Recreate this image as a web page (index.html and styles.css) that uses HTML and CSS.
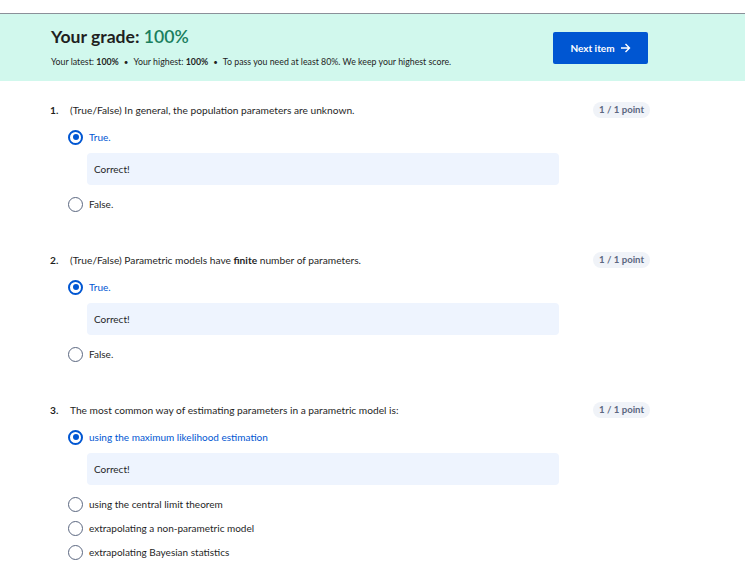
FILE: index.html
```html
<!DOCTYPE html>
<html>
<head>
<meta charset="utf-8">
<link rel="stylesheet" href="styles.css">
</head>
<body>
<header class="grade">
  <div class="grade-text">
    <h1 class="title">Your grade: <span class="pct">100%</span></h1>
    <p class="sub">Your latest: <b>100%</b><span class="dot">•</span>Your highest: <b>100%</b><span class="dot">•</span>To pass you need at least 80%. We keep your highest score.</p>
  </div>
  <button class="next">Next item
    <svg class="arrow" width="11" height="10" viewBox="0 0 11 10"><path d="M1 5h8.5M5.5 1l4 4-4 4" fill="none" stroke="#fff" stroke-width="1.4"/></svg>
  </button>
</header>

<main class="quiz">
  <section class="q">
    <div class="q-row">
      <span class="num">1.</span>
      <span class="q-text">(True/False) In general, the population parameters are unknown.</span>
      <span class="badge">1 / 1 point</span>
    </div>
    <div class="opts">
      <div class="opt sel"><span class="radio"></span><span class="lbl">True.</span></div>
      <div class="fb">Correct!</div>
      <div class="opt"><span class="radio"></span><span class="lbl">False.</span></div>
    </div>
  </section>

  <section class="q">
    <div class="q-row">
      <span class="num">2.</span>
      <span class="q-text">(True/False) Parametric models have <b>finite</b> number of parameters.</span>
      <span class="badge">1 / 1 point</span>
    </div>
    <div class="opts">
      <div class="opt sel"><span class="radio"></span><span class="lbl">True.</span></div>
      <div class="fb">Correct!</div>
      <div class="opt"><span class="radio"></span><span class="lbl">False.</span></div>
    </div>
  </section>

  <section class="q">
    <div class="q-row">
      <span class="num">3.</span>
      <span class="q-text">The most common way of estimating parameters in a parametric model is:</span>
      <span class="badge">1 / 1 point</span>
    </div>
    <div class="opts">
      <div class="opt sel"><span class="radio"></span><span class="lbl">using the maximum likelihood estimation</span></div>
      <div class="fb">Correct!</div>
      <div class="opt"><span class="radio"></span><span class="lbl">using the central limit theorem</span></div>
      <div class="opt"><span class="radio"></span><span class="lbl">extrapolating a non-parametric model</span></div>
      <div class="opt"><span class="radio"></span><span class="lbl">extrapolating Bayesian statistics</span></div>
    </div>
  </section>
</main>
</body>
</html>
```
FILE: styles.css
```css
* { box-sizing: border-box; }
html, body { margin: 0; padding: 0; background: #fff; }
body {
  font-family: Lato, "Noto Sans", sans-serif;
  color: #1f1f1f;
  padding-top: 13px;
}

.grade {
  border-top: 1px solid #8b9099;
  background: #d1f8ed;
  height: 68px;
  display: flex;
  align-items: center;
  justify-content: space-between;
  padding: 0 97px 0 51px;
}
.grade-text { padding-bottom: 2px; }
.title {
  margin: 0;
  font-size: 17.6px;
  font-weight: 700;
  line-height: 22px;
  color: #1f1f1f;
}
.pct { color: #1a7f5e; font-weight: 600; }
.sub {
  margin: 8px 0 0;
  font-size: 8.8px;
  line-height: 12px;
  color: #1f1f1f;
}
.sub b { font-weight: 700; }
.dot { margin: 0 5px; font-size: 8px; }

.next {
  width: 95px;
  height: 32px;
  border: 0;
  border-radius: 2px;
  background: #0056d2;
  color: #fff;
  font-family: Lato, "Noto Sans", sans-serif;
  font-size: 10px;
  font-weight: 700;
  display: flex;
  align-items: center;
  justify-content: center;
  gap: 5px;
  padding: 0;
  margin-top: 1px;
}
.arrow { display: block; }

.quiz {
  padding: 21px 95px 0 50px;
}
.q { margin-bottom: 36px; }
.q-row {
  display: flex;
  align-items: center;
  height: 16px;
  font-size: 10.2px;
}
.num { width: 20px; font-weight: 700; }
.q-text { flex: 1; }
.q-text b { font-weight: 700; }
.badge {
  background: #f0f3f8;
  color: #5b6780;
  font-weight: 700;
  font-size: 9.6px;
  height: 16px;
  line-height: 16px;
  padding: 0 6px;
  border-radius: 8px;
}

.opts { margin-top: 7px; padding-left: 19px; }
.opt {
  display: flex;
  align-items: center;
  height: 24px;
  gap: 6px;
  font-size: 10px;
}
.radio {
  width: 15px;
  height: 15px;
  margin-left: -1px;
  border-radius: 50%;
  border: 1.5px solid #5b6780;
  flex: none;
  position: relative;
}
.opt.sel .radio { border: 2px solid #0056d2; }
.opt.sel .radio::after {
  content: "";
  position: absolute;
  left: 2.5px; top: 2.5px;
  width: 6px; height: 6px;
  border-radius: 50%;
  background: #0056d2;
}
.opt.sel .lbl { color: #0056d2; }

.fb {
  margin: 4px 0 7px 18px;
  width: 472px;
  height: 32px;
  background: #eef4fe;
  border-radius: 4px;
  display: flex;
  align-items: center;
  padding-left: 7px;
  font-size: 10px;
}
```
